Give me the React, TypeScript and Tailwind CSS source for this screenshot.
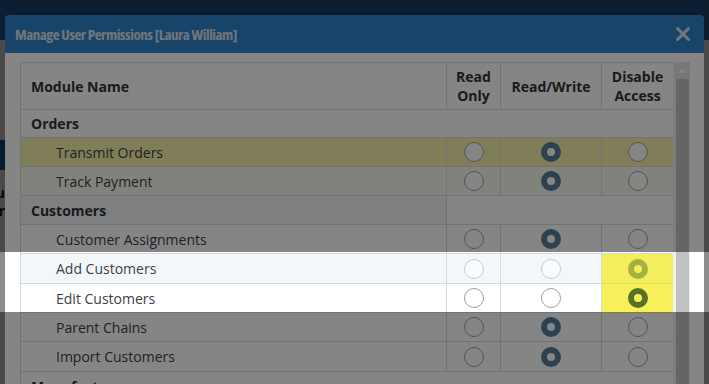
import React from 'react';
import { X } from 'lucide-react';

type Row = {
  name: string;
  group?: boolean;
  split?: boolean;
  sel?: 0 | 1 | 2;
  bg?: string;
  h?: string;
  faded?: boolean;
  hl?: 'add' | 'edit';
};

const rows: Row[] = [
  { name: 'Orders', group: true, h: 'h-[28px]' },
  { name: 'Transmit Orders', sel: 1, bg: 'bg-[#f6f2a9]' },
  { name: 'Track Payment', sel: 1, bg: 'bg-[#f9f9ee]' },
  { name: 'Customers', group: true, split: true },
  { name: 'Customer Assignments', sel: 1 },
  { name: 'Add Customers', sel: 2, bg: 'bg-[#f4f7fa]', faded: true, hl: 'add', h: 'h-[30px]' },
  { name: 'Edit Customers', sel: 2, hl: 'edit' },
  { name: 'Parent Chains', sel: 1 },
  { name: 'Import Customers', sel: 1, h: 'h-[30px]' },
  { name: 'Manufacturers', group: true },
];

function Radio({ on, hl, faded }: { on: boolean; hl?: boolean; faded?: boolean }) {
  let cls = 'w-5 h-5 rounded-full border border-[#a0a0a0] bg-white';
  if (on && hl) cls = 'w-5 h-5 rounded-full border-[6px] border-[#5a7028] bg-transparent';
  else if (on) cls = 'w-5 h-5 rounded-full border-[6px] border-[#557f99] bg-white';
  return <div className={cls + (faded ? ' opacity-50' : '')} />;
}

function TableRow({ row }: { row: Row }) {
  const h = row.h ?? 'h-[29px]';
  if (row.group) {
    return (
      <div className={`flex ${h} border-b border-[#d6dae0] text-[14px] font-bold text-[#333]`}>
        <div className={`w-[426px] flex items-center pl-[10px] ${row.split ? 'bg-[#f1f3f8] border-r border-[#d6dae0]' : ''}`}>
          {row.name}
        </div>
        <div className="flex-1" />
      </div>
    );
  }
  const yellow =
    row.hl === 'add'
      ? 'bg-[#f2ee5c] border-[#e2de52]'
      : row.hl === 'edit'
        ? 'bg-[#f6f15a] border-[#f6f15a]'
        : 'border-[#d6dae0]';
  return (
    <div className={`flex ${h} border-b border-[#d6dae0] text-[14px] text-[#3a3f47] ${row.bg ?? 'bg-white'}`}>
      <div className="w-[426px] flex items-center pl-[35px] border-r border-[#d6dae0]">{row.name}</div>
      <div className="w-[54px] flex items-center justify-center border-r border-[#d6dae0]">
        <Radio on={row.sel === 0} faded={row.faded} />
      </div>
      <div className="w-[101px] flex items-center justify-center border-r border-[#d6dae0]">
        <Radio on={row.sel === 1} faded={row.faded} />
      </div>
      <div className={`w-[71px] flex items-center justify-center border-b -mb-px ${yellow}`}>
        <Radio on={row.sel === 2} hl={!!row.hl} faded={row.faded} />
      </div>
    </div>
  );
}

export default function App() {
  return (
    <div className="relative w-[709px] h-[384px] overflow-hidden bg-white font-['Open_Sans',sans-serif]">
      {/* page behind the modal */}
      <div className="h-[40px] bg-[#2d6aa5]" />
      <div className="mt-[100px] h-[30px] w-[40px] bg-[#1f63a8]" />
      <div className="mt-[14px] w-[5px] overflow-hidden flex flex-col items-end text-[14px] font-bold text-[#222] leading-[18px]">
        <div className="flex justify-end w-[5px]">Menu</div>
        <div className="flex justify-end w-[5px]">Order</div>
      </div>
      <div className="absolute inset-0 bg-black/45" />

      {/* modal */}
      <div className="absolute left-[5px] top-[15px] w-[699px] h-[420px] bg-white rounded-t-[5px] overflow-hidden">
        <div className="h-[38px] bg-[#2f83cc] flex items-center justify-between pl-[10px] pr-[10px]">
          <span className="text-[15px] font-bold font-stretch-condensed tracking-[-0.45px] text-[#dde3ea]">
            Manage User Permissions [Laura William]
          </span>
          <X size={22} strokeWidth={3.2} className="text-[#dde3ea]" />
        </div>
        <div className="flex pt-[9px] pl-[15px] pr-[14px]">
          <div className="w-[653px] border-l border-t border-[#d6dae0]">
            <div className="flex h-[47px] border-b border-[#d6dae0] text-[14px] font-bold text-[#333] leading-[19px]">
              <div className="w-[426px] flex items-center pl-[10px] border-r border-[#d6dae0]">Module Name</div>
              <div className="w-[54px] flex items-center justify-center text-center border-r border-[#d6dae0]">
                Read
                <br />
                Only
              </div>
              <div className="w-[101px] flex items-center justify-center border-r border-[#d6dae0]">Read/Write</div>
              <div className="w-[71px] flex items-center justify-center text-center">
                Disable
                <br />
                Access
              </div>
            </div>
            {rows.map((r) => (
              <TableRow key={r.name} row={r} />
            ))}
          </div>
          <div className="w-[17px] border-l border-[#f1f1f1] bg-[#f1f1f1] flex flex-col items-center">
            <div className="h-[17px] w-full bg-[#e4e4e4] flex items-center justify-center">
              <div className="w-0 h-0 border-l-[4px] border-r-[4px] border-b-[5px] border-l-transparent border-r-transparent border-b-white" />
            </div>
            <div className="w-[13px] h-[400px] bg-[#c1c1c1]" />
          </div>
        </div>
      </div>

      {/* tour spotlight */}
      <div className="absolute left-0 top-[252px] w-[709px] h-[60px] shadow-[0_0_0_9999px_rgba(0,0,0,0.48)] pointer-events-none" />
    </div>
  );
}
